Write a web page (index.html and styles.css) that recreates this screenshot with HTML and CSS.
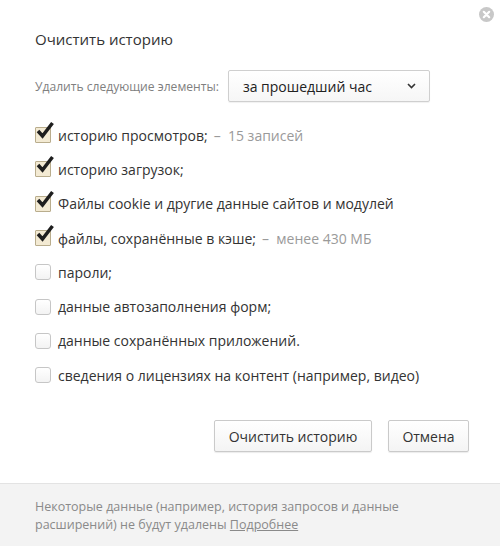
FILE: index.html
```html
<!DOCTYPE html>
<html lang="ru">
<head>
<meta charset="utf-8">
<link rel="stylesheet" href="styles.css">
</head>
<body>
<div class="dialog">
  <div class="main">
    <button class="close" aria-label="Закрыть">
      <svg width="15" height="15" viewBox="0 0 15 15"><circle cx="7.5" cy="7.5" r="7.5" fill="#c8c8c8"/><path d="M4.8 4.8 L10.2 10.2 M10.2 4.8 L4.8 10.2" stroke="#fff" stroke-width="2.2" stroke-linecap="round"/></svg>
    </button>
    <h1 class="title">Очистить историю</h1>
    <div class="period">
      <span class="period-label">Удалить следующие элементы:</span>
      <div class="select">
        <span>за прошедший час</span>
        <svg width="9" height="6" viewBox="0 0 9 6"><path d="M1 1 L4.5 4.5 L8 1" fill="none" stroke="#333" stroke-width="1.6"/></svg>
      </div>
    </div>
    <ul class="items">
      <li class="item"><span class="box checked"><svg class="tick" width="20" height="20" viewBox="0 0 20 20"><path d="M3 10 L7.5 15 L17.5 2" fill="none" stroke="#1e1e1e" stroke-width="3.5"/></svg></span><span>историю просмотров;</span><span class="note">–&nbsp; 15 записей</span></li>
      <li class="item"><span class="box checked"><svg class="tick" width="20" height="20" viewBox="0 0 20 20"><path d="M3 10 L7.5 15 L17.5 2" fill="none" stroke="#1e1e1e" stroke-width="3.5"/></svg></span><span>историю загрузок;</span></li>
      <li class="item"><span class="box checked"><svg class="tick" width="20" height="20" viewBox="0 0 20 20"><path d="M3 10 L7.5 15 L17.5 2" fill="none" stroke="#1e1e1e" stroke-width="3.5"/></svg></span><span>Файлы cookie и другие данные сайтов и модулей</span></li>
      <li class="item"><span class="box checked"><svg class="tick" width="20" height="20" viewBox="0 0 20 20"><path d="M3 10 L7.5 15 L17.5 2" fill="none" stroke="#1e1e1e" stroke-width="3.5"/></svg></span><span>файлы, сохранённые в кэше;</span><span class="note">–&nbsp; менее 430 МБ</span></li>
      <li class="item"><span class="box"></span><span>пароли;</span></li>
      <li class="item"><span class="box"></span><span>данные автозаполнения форм;</span></li>
      <li class="item"><span class="box"></span><span>данные сохранённых приложений.</span></li>
      <li class="item"><span class="box"></span><span>сведения о лицензиях на контент (например, видео)</span></li>
    </ul>
    <div class="actions">
      <button class="btn btn-clear">Очистить историю</button>
      <button class="btn btn-cancel">Отмена</button>
    </div>
  </div>
  <div class="footer">
    <span class="line">Некоторые данные (например, история запросов и данные</span>
    <span class="line"><span>расширений) не будут удалены</span> <a href="#">Подробнее</a></span>
  </div>
</div>
</body>
</html>
```

FILE: styles.css
```css
* { box-sizing: border-box; }
html, body { margin: 0; padding: 0; background: #fff; }
body {
  font-family: "Open Sans", "Noto Sans", sans-serif;
  color: #333;
  width: 500px;
  height: 546px;
  overflow: hidden;
}
.dialog { display: flex; flex-direction: column; height: 546px; }
.main { position: relative; padding: 28px 31px 0 35px; flex: 1; }
.close {
  position: absolute; top: 7px; right: 6px;
  border: 0; background: none; padding: 0; width: 15px; height: 15px; line-height: 0;
}
.title {
  margin: 0; font-size: 15px; font-weight: 400; color: #333; line-height: 22px;
}
.period { display: flex; align-items: center; margin-top: 20px; gap: 9px; }
.period-label { font-size: 12.1px; color: #808080; }
.select {
  width: 202px; height: 32px;
  border: 1px solid #cfcfcf; border-radius: 2px;
  background: linear-gradient(#fff, #f6f6f6);
  display: flex; align-items: center; justify-content: space-between;
  padding: 0 13px 0 14px; font-size: 14px; color: #222;
  box-shadow: 0 1px 1px rgba(0,0,0,0.06);
}
.items { list-style: none; margin: 16px 0 0; padding: 0; }
.item {
  display: flex; align-items: center; height: 34.3px;
  font-size: 14px; color: #333; white-space: nowrap;
}
.box {
  position: relative; flex: none;
  width: 16px; height: 16px; margin-right: 7px;
  border: 1px solid #c6c6c6; border-radius: 3px;
  background: linear-gradient(#fff, #f3f3f3);
}
.box.checked { background: #f3ead3; border-color: #b9ad8d; border-radius: 1px; }
.tick { position: absolute; left: -1px; top: -7px; }
.note { color: #9a9a9a; margin-left: 6px; }
.actions { display: flex; justify-content: flex-end; gap: 16px; margin-top: 28px; }
.btn {
  font-family: inherit; font-size: 14px; color: #333;
  height: 32px; border: 1px solid #cacaca; border-radius: 2px;
  background: linear-gradient(#fff, #f4f4f4);
  box-shadow: 0 1px 1px rgba(0,0,0,0.08);
  padding: 0;
}
.btn-clear { width: 158px; }
.btn-cancel { width: 81px; }
.footer {
  height: 63px; flex: none;
  background: #f3f3f3; border-top: 1px solid #e3e3e3;
  padding: 14px 20px 0 35px;
  font-size: 12.5px; line-height: 18px; color: #8a8a8a;
}
.line { display: block; white-space: nowrap; }
.footer a { color: #8a8a8a; text-decoration: underline; }
```
